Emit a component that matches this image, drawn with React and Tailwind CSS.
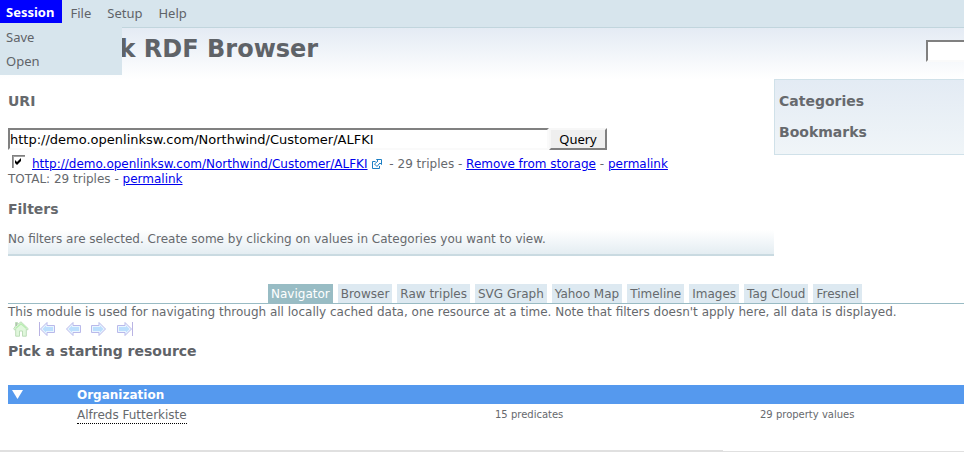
import { useState } from "react";

const menus = ["File", "Setup", "Help"];
const tabs = ["Navigator", "Browser", "Raw triples", "SVG Graph", "Yahoo Map", "Timeline", "Images", "Tag Cloud", "Fresnel"];

const uri = "http://demo.openlinksw.com/Northwind/Customer/ALFKI";

function MenuBar() {
  return (
    <nav className="relative z-10 flex h-7 items-start border-b border-[#c1d5dd] bg-[#d7e5ed] font-['Noto_Sans',sans-serif] text-[13px] leading-[23px] text-[#5f6368]">
      <div className="relative">
        <button type="button" className="block h-[23px] bg-[#0000ff] pt-[2px] pr-2 pl-[6px] leading-[21px] font-bold text-white">Session</button>
        <div className="absolute top-[23px] left-0 flex h-[52px] w-[122px] flex-col items-start bg-[#d7e5ed] pl-[6px] leading-6">
          <button type="button" className="h-6 pt-[2px]">Save</button>
          <button type="button" className="h-6 pt-[2px]">Open</button>
        </div>
      </div>
      <div className="flex gap-4 pt-[2px] pl-2">
        {menus.map((m) => (
          <button type="button" key={m} className="leading-[23px]">{m}</button>
        ))}
      </div>
    </nav>
  );
}

function Link({ children }) {
  return <a href="#" className="text-[#0000ee] underline">{children}</a>;
}

function ExternalIcon() {
  return (
    <svg viewBox="0 0 10 10" className="mx-1 inline-block h-[10px] w-[10px] align-[-1px]" fill="none" stroke="#1c7fc4" aria-hidden="true">
      <path d="M3.500 2.500H.5v7h7v-2.500" />
      <path d="M4.500.5h5v5L8 4 5 7.500 2.500 5 6 2z" fill="#fff" />
    </svg>
  );
}

function Arrow({ flip, bar }) {
  return (
    <svg viewBox="0 0 16 14" className={flip ? "h-[14px] w-4 -scale-x-100" : "h-[14px] w-4"} aria-hidden="true">
      {bar && <path d="M.5 0v14" stroke="#b9b3e3" />}
      <path d="M1.500 7L8 .5v3h7.500v7H8v3z" fill="#eaf5ff" stroke="#b9b9ea" strokeLinejoin="round" />
      <path d="M3.500 7L7 3.500V5h7v4H7v1.500z" fill="#bcdffd" />
    </svg>
  );
}

function House() {
  return (
    <svg viewBox="0 0 16 16" className="h-4 w-4" aria-hidden="true">
      <path d="M2.500 5V1.500h2v2L8 .8l7.300 7-1 1.200-1-.8v7H9.500V10h-3v5.200H2.700v-7l-1 .8-1-1.200z" fill="#e0f7dc" stroke="#bddcb9" strokeWidth="1" strokeLinejoin="round" />
      <path d="M3.500 2v3" stroke="#b5bdb5" />
      <path d="M2.500 7.500L8 2.700l5.500 4.800" fill="none" stroke="#b5ecae" strokeWidth="1.200" />
    </svg>
  );
}

function QueryPanel() {
  const [value, setValue] = useState(uri);
  return (
    <section className="w-[766px] shrink-0 border-b-2 border-[#c9dae1] bg-[linear-gradient(to_top,#e4edf2,#ffffff_24px)] pb-[7px]">
      <h2 className="pt-[14px] text-sm leading-4 font-bold"><label htmlFor="uri">URI</label></h2>
      <form className="mt-[19px] flex h-[22px]" onSubmit={(e) => e.preventDefault()}>
        <input
          id="uri"
          value={value}
          onChange={(e) => setValue(e.target.value)}
          className="h-[22px] w-[541px] border-2 border-t-[#808080] border-r-[#fafafa] border-b-[#fafafa] border-l-[#808080] bg-white text-[13px] text-black outline-none"
        />
        <button type="submit" className="h-[22px] w-[58px] border-2 border-t-[#f7f7f7] border-r-[#808080] border-b-[#808080] border-l-[#f7f7f7] bg-[#efefef] font-['Noto_Sans',sans-serif] text-[13px] leading-[18px] text-black">Query</button>
      </form>
      <div className="mt-[5px] flex h-4 items-start">
        <label className="relative ml-1 h-[13px] w-[13px]">
          <input type="checkbox" defaultChecked aria-label={uri} className="block h-[13px] w-[13px] appearance-none border-t border-l border-[#808080] bg-white shadow-[inset_1px_1px_0_#a0a0a0]" />
          <svg viewBox="0 0 13 13" className="pointer-events-none absolute inset-0" aria-hidden="true">
            <path d="M3 5v3l2 2 4-4V3L5 7z" fill="#000" />
          </svg>
        </label>
        <p className="pl-[7px] leading-[18px] whitespace-nowrap">
          <Link>{uri}</Link><ExternalIcon /> - 29 triples - <Link>Remove from storage</Link> - <Link>permalink</Link>
        </p>
      </div>
      <p className="leading-[17px]">TOTAL: 29 triples - <Link>permalink</Link></p>
      <h2 className="mt-[13px] text-sm leading-4 font-bold">Filters</h2>
      <p className="mt-[15px] leading-[15px]">No filters are selected. Create some by clicking on values in Categories you want to view.</p>
    </section>
  );
}

export default function App() {
  return (
    <div className="overflow-hidden bg-white font-['DejaVu_Sans',sans-serif] text-xs text-[#66696d]">
      <MenuBar />
      <header className="flex h-[51px] items-start justify-between bg-linear-to-b from-[#e4ebf4] to-white pl-2">
        <h1 className="pt-[7px] text-2xl leading-7 font-bold text-[#5f6368]">OpenLink RDF Browser</h1>
        <input aria-label="Search" className="mt-3 -mr-[120px] h-[22px] w-[158px] border-2 border-t-[#808080] border-r-[#fafafa] border-b-[#fafafa] border-l-[#808080] bg-white px-1 outline-none" />
      </header>
      <main className="pl-2">
        <div className="flex items-start">
          <QueryPanel />
          <aside className="min-w-0 grow border border-r-0 border-[#d0e1e9] bg-linear-to-b from-[#e3ebf4] to-[#f0f5f8] pt-[13px] pb-[14px] pl-1 text-sm leading-4 font-bold">
            <h2>Categories</h2>
            <h2 className="mt-[15px]">Bookmarks</h2>
          </aside>
        </div>
        <div role="tablist" className="mt-7 flex gap-[5px] border-b border-[#99bbc4] pl-[260px]">
          {tabs.map((t, i) => (
            <button
              type="button"
              role="tab"
              aria-selected={i === 0}
              key={t}
              className={i === 0 ? "h-[19px] bg-[#98bcc4] px-[3px] whitespace-nowrap text-white" : "h-[19px] bg-[#dde9f1] px-[3px] whitespace-nowrap"}
            >
              {t}
            </button>
          ))}
        </div>
        <p className="leading-4 whitespace-nowrap">This module is used for navigating through all locally cached data, one resource at a time. Note that filters doesn't apply here, all data is displayed.</p>
        <div className="flex h-[18px] items-center gap-[10px] pl-[5px]">
          <button type="button" aria-label="Home"><House /></button>
          <button type="button" aria-label="First"><Arrow bar /></button>
          <button type="button" aria-label="Back"><Arrow /></button>
          <button type="button" aria-label="Forward"><Arrow flip /></button>
          <button type="button" aria-label="Last"><Arrow flip bar /></button>
        </div>
        <h2 className="mt-[5px] text-sm leading-4 font-bold text-[#5f6368]">Pick a starting resource</h2>
        <table className="mt-[26px] w-full table-fixed border-collapse text-left">
          <thead>
            <tr className="h-[19px] bg-[#5599ee] text-white">
              <th className="w-[69px] p-0 pl-1">
                <button type="button" aria-label="Collapse" className="block">
                  <svg viewBox="0 0 11 9" className="h-[9px] w-[11px]" aria-hidden="true"><path d="M0 0h11L5.500 9z" fill="#fff" /></svg>
                </button>
              </th>
              <th className="w-[418px] p-0 font-bold">Organization</th>
              <th className="w-[265px] p-0" />
              <th className="p-0" />
            </tr>
          </thead>
          <tbody>
            <tr className="h-[21px]">
              <td className="p-0" />
              <td className="p-0 pt-px"><a href="#" className="inline-block border-b border-dotted border-black leading-[15px]">Alfreds Futterkiste</a></td>
              <td className="p-0 text-[10px]">15 predicates</td>
              <td className="p-0 text-[10px] whitespace-nowrap">29 property values</td>
            </tr>
          </tbody>
        </table>
      </main>
      <footer className="mt-[25px] flex h-[2px] items-end">
        <div className="h-[2px] w-3/4 bg-[#e0e0e0]" />
        <div className="h-px grow bg-[#e0e0e0]" />
      </footer>
    </div>
  );
}
